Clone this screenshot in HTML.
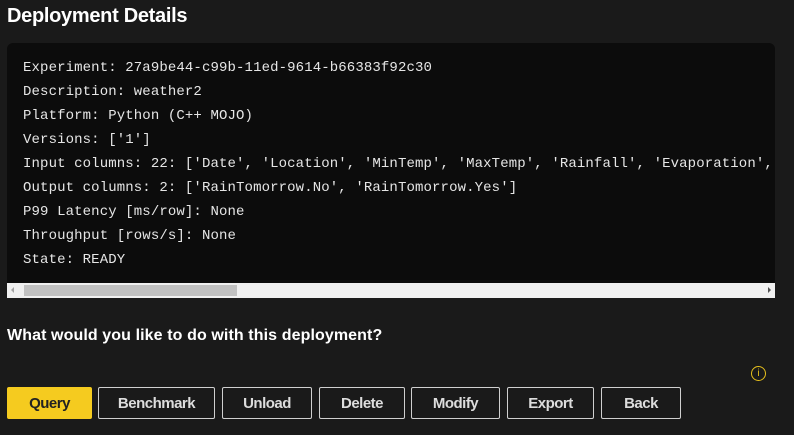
<!DOCTYPE html>
<html><head><style>
body{margin:0;width:794px;height:435px;background:#1a1a1a;overflow:hidden;font-family:"Liberation Sans",sans-serif;color:#fff;position:relative}
h1{position:absolute;left:7px;top:5px;margin:0;font-size:20px;font-weight:bold;letter-spacing:-0.3px}
.code{position:absolute;left:7px;top:43px;width:768px;height:240px;background:#0c0c0c;border-radius:6px 6px 0 0;overflow:hidden}
.code pre{margin:0;position:absolute;left:16px;top:13px;font-family:"Liberation Mono",monospace;font-size:14px;line-height:24px;color:#e6e6e6;letter-spacing:0.12px;white-space:pre}
.sb{position:absolute;left:7px;top:283px;width:768px;height:15px;background:#f0f0f0}
.thumb{position:absolute;left:17px;top:2px;width:213px;height:11px;background:#c1c1c1}
.la{position:absolute;left:4px;top:4px;width:0;height:0;border-top:3.5px solid transparent;border-bottom:3.5px solid transparent;border-right:3px solid #a3a3a3}
.ra{position:absolute;right:4px;top:4px;width:0;height:0;border-top:3.5px solid transparent;border-bottom:3.5px solid transparent;border-left:3px solid #505050}
.q{position:absolute;left:7px;top:327px;font-size:16px;font-weight:bold;letter-spacing:0.1px}
.btn{position:absolute;top:387px;height:30px;border:1px solid #d0d0d0;border-radius:2px;color:#ddd;font-size:15px;font-weight:bold;display:flex;align-items:center;justify-content:center;box-sizing:content-box;letter-spacing:-0.5px}
.info{position:absolute;left:751px;top:366px;width:13px;height:13px;border:1.5px solid #e8c11c;border-radius:50%;color:#e8c11c;font-size:10px;line-height:13px;text-align:center}
</style></head><body>
<h1>Deployment Details</h1>
<div class="code"><pre>Experiment: 27a9be44-c99b-11ed-9614-b66383f92c30
Description: weather2
Platform: Python (C++ MOJO)
Versions: ['1']
Input columns: 22: ['Date', 'Location', 'MinTemp', 'MaxTemp', 'Rainfall', 'Evaporation', 'Sunshine']
Output columns: 2: ['RainTomorrow.No', 'RainTomorrow.Yes']
P99 Latency [ms/row]: None
Throughput [rows/s]: None
State: READY</pre></div>
<div class="sb"><div class="la"></div><div class="thumb"></div><div class="ra"></div></div>
<div class="q">What would you like to do with this deployment?</div>
<div class="info">i</div>
<div class="btn" style="left:7px;width:83px;background:#f5cb1f;border-color:#f5cb1f;color:#222">Query</div>
<div class="btn" style="left:98px;width:115px">Benchmark</div>
<div class="btn" style="left:222px;width:88px">Unload</div>
<div class="btn" style="left:319px;width:84px">Delete</div>
<div class="btn" style="left:411px;width:87px">Modify</div>
<div class="btn" style="left:507px;width:85px">Export</div>
<div class="btn" style="left:601px;width:78px">Back</div>
</body></html>
